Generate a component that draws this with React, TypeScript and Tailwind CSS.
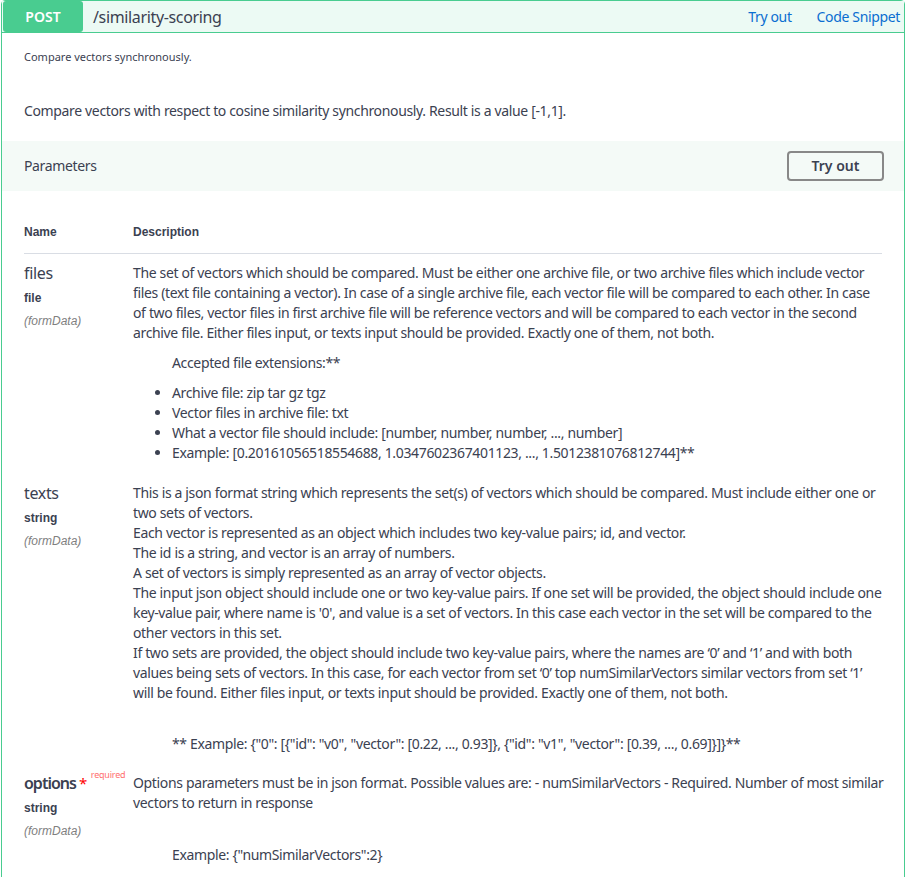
import React from "react";

const body = "font-['Noto_Sans',sans-serif] tracking-[-0.35px]";
const arial = "font-['Liberation_Sans',Arial,sans-serif]";

function Lines({ lines }: { lines: string[] }) {
  return (
    <>
      {lines.map((l, i) => (
        <div key={i} className="whitespace-nowrap">
          {l}
        </div>
      ))}
    </>
  );
}

function ParamName({
  name,
  type,
  required,
}: {
  name: string;
  type: string;
  required?: boolean;
}) {
  return (
    <div className="w-[109px] shrink-0">
      <div className={`${body} text-[16px] leading-[20px] text-[#3b4151] flex items-start whitespace-nowrap`}>
        <span className={required ? "font-semibold tracking-[-1px]" : ""}>{name}</span>
        {required && (
          <>
            <span className="text-[#ff0000] ml-[3px] text-[15px]">*</span>
            <span className="text-[#ff0000]/60 text-[9px] leading-[10px] ml-[4px] -mt-[3px] tracking-[-0.2px]">required</span>
          </>
        )}
      </div>
      <div className={`${arial} font-bold text-[12px] text-[#3b4151] mt-[6px]`}>{type}</div>
      <div className={`${arial} italic text-[12px] text-[#808080] mt-[5px]`}>(formData)</div>
    </div>
  );
}

export default function App() {
  return (
    <div className="min-h-[877px] bg-white px-[1px] pb-0">
      <div className="border border-[#49cc90] rounded-[4px] min-h-[900px]">
        {/* Summary bar */}
        <div className="flex items-center h-[32px] bg-[#ecfaf4] border-b border-[#49cc90] pl-[1px] pr-[4px]">
          <div className={`${body} w-[80px] h-[31px] bg-[#49cc90] rounded-[3px] text-white font-semibold text-[14px] flex items-center justify-center tracking-normal`}>
            POST
          </div>
          <div className={`${body} ml-[10px] text-[16px] text-[#3b4151] flex-1 tracking-[-0.6px]`}>/similarity-scoring</div>
          <div className={`${body} text-[14px] text-[#0a6ed1] flex gap-[25px]`}>
            <span>Try out</span>
            <span>Code Snippet</span>
          </div>
        </div>

        {/* Descriptions */}
        <div className={`${body} px-[22px] text-[#3b4151]`}>
          <div className="text-[11px] pt-[16px] tracking-normal">Compare vectors synchronously.</div>
          <div className="text-[14px] mt-[34px]">
            Compare vectors with respect to cosine similarity synchronously. Result is a value [-1,1].
          </div>
        </div>

        {/* Parameters header */}
        <div className="mt-[20px] h-[50px] bg-[#f4faf7] flex items-center justify-between pl-[22px] pr-[20px]">
          <span className={`${body} text-[14px] text-[#3b4151]`}>Parameters</span>
          <button className={`${body} w-[97px] h-[30px] border-2 border-[#888888] rounded-[4px] bg-transparent text-[14px] font-semibold text-[#3b4151] tracking-normal`}>
            Try out
          </button>
        </div>

        {/* Parameters table */}
        <div className="px-[22px] pt-[32px] text-[#3b4151]">
          <div className={`${arial} flex font-bold text-[12px] pb-[12px] border-b border-[#d9dde4]`}>
            <div className="w-[109px]">Name</div>
            <div>Description</div>
          </div>

          {/* files */}
          <div className="flex pt-[9px]">
            <ParamName name="files" type="file" />
            <div className={`${body} text-[14px] leading-[20px]`}>
              <Lines
                lines={[
                  "The set of vectors which should be compared. Must be either one archive file, or two archive files which include vector",
                  "files (text file containing a vector). In case of a single archive file, each vector file will be compared to each other. In case",
                  "of two files, vector files in first archive file will be reference vectors and will be compared to each vector in the second",
                  "archive file. Either files input, or texts input should be provided. Exactly one of them, not both.",
                ]}
              />
              <div className="pl-[39px] mt-[10px]">Accepted file extensions:**</div>
              <ul className="list-disc pl-[39px] mt-[10px]">
                <li>Archive file: zip tar gz tgz</li>
                <li>Vector files in archive file: txt</li>
                <li>What a vector file should include: [number, number, number, ..., number]</li>
                <li>Example: [0.20161056518554688, 1.0347602367401123, ..., 1.5012381076812744]**</li>
              </ul>
            </div>
          </div>

          {/* texts */}
          <div className="flex pt-[20px]">
            <ParamName name="texts" type="string" />
            <div className={`${body} text-[14px] leading-[20px]`}>
              <Lines
                lines={[
                  "This is a json format string which represents the set(s) of vectors which should be compared. Must include either one or",
                  "two sets of vectors.",
                  "Each vector is represented as an object which includes two key-value pairs; id, and vector.",
                  "The id is a string, and vector is an array of numbers.",
                  "A set of vectors is simply represented as an array of vector objects.",
                  "The input json object should include one or two key-value pairs. If one set will be provided, the object should include one",
                  "key-value pair, where name is '0', and value is a set of vectors. In this case each vector in the set will be compared to the",
                  "other vectors in this set.",
                  "If two sets are provided, the object should include two key-value pairs, where the names are \u20180\u2019 and \u20181\u2019 and with both",
                  "values being sets of vectors. In this case, for each vector from set \u20180\u2019 top numSimilarVectors similar vectors from set \u20181\u2019",
                  "will be found. Either files input, or texts input should be provided. Exactly one of them, not both.",
                ]}
              />
              <div className="pl-[39px] mt-[31px] whitespace-nowrap">
                ** Example: {'{"0": [{"id": "v0", "vector": [0.22, ..., 0.93]}, {"id": "v1", "vector": [0.39, ..., 0.69]}]}**'}
              </div>
            </div>
          </div>

          {/* options */}
          <div className="flex pt-[19px]">
            <ParamName name="options" type="string" required />
            <div className={`${body} text-[14px] leading-[20px]`}>
              <Lines
                lines={[
                  "Options parameters must be in json format. Possible values are: - numSimilarVectors - Required. Number of most similar",
                  "vectors to return in response",
                ]}
              />
              <div className="pl-[39px] mt-[32px]">Example: {'{"numSimilarVectors":2}'}</div>
            </div>
          </div>
        </div>
      </div>
    </div>
  );
}
